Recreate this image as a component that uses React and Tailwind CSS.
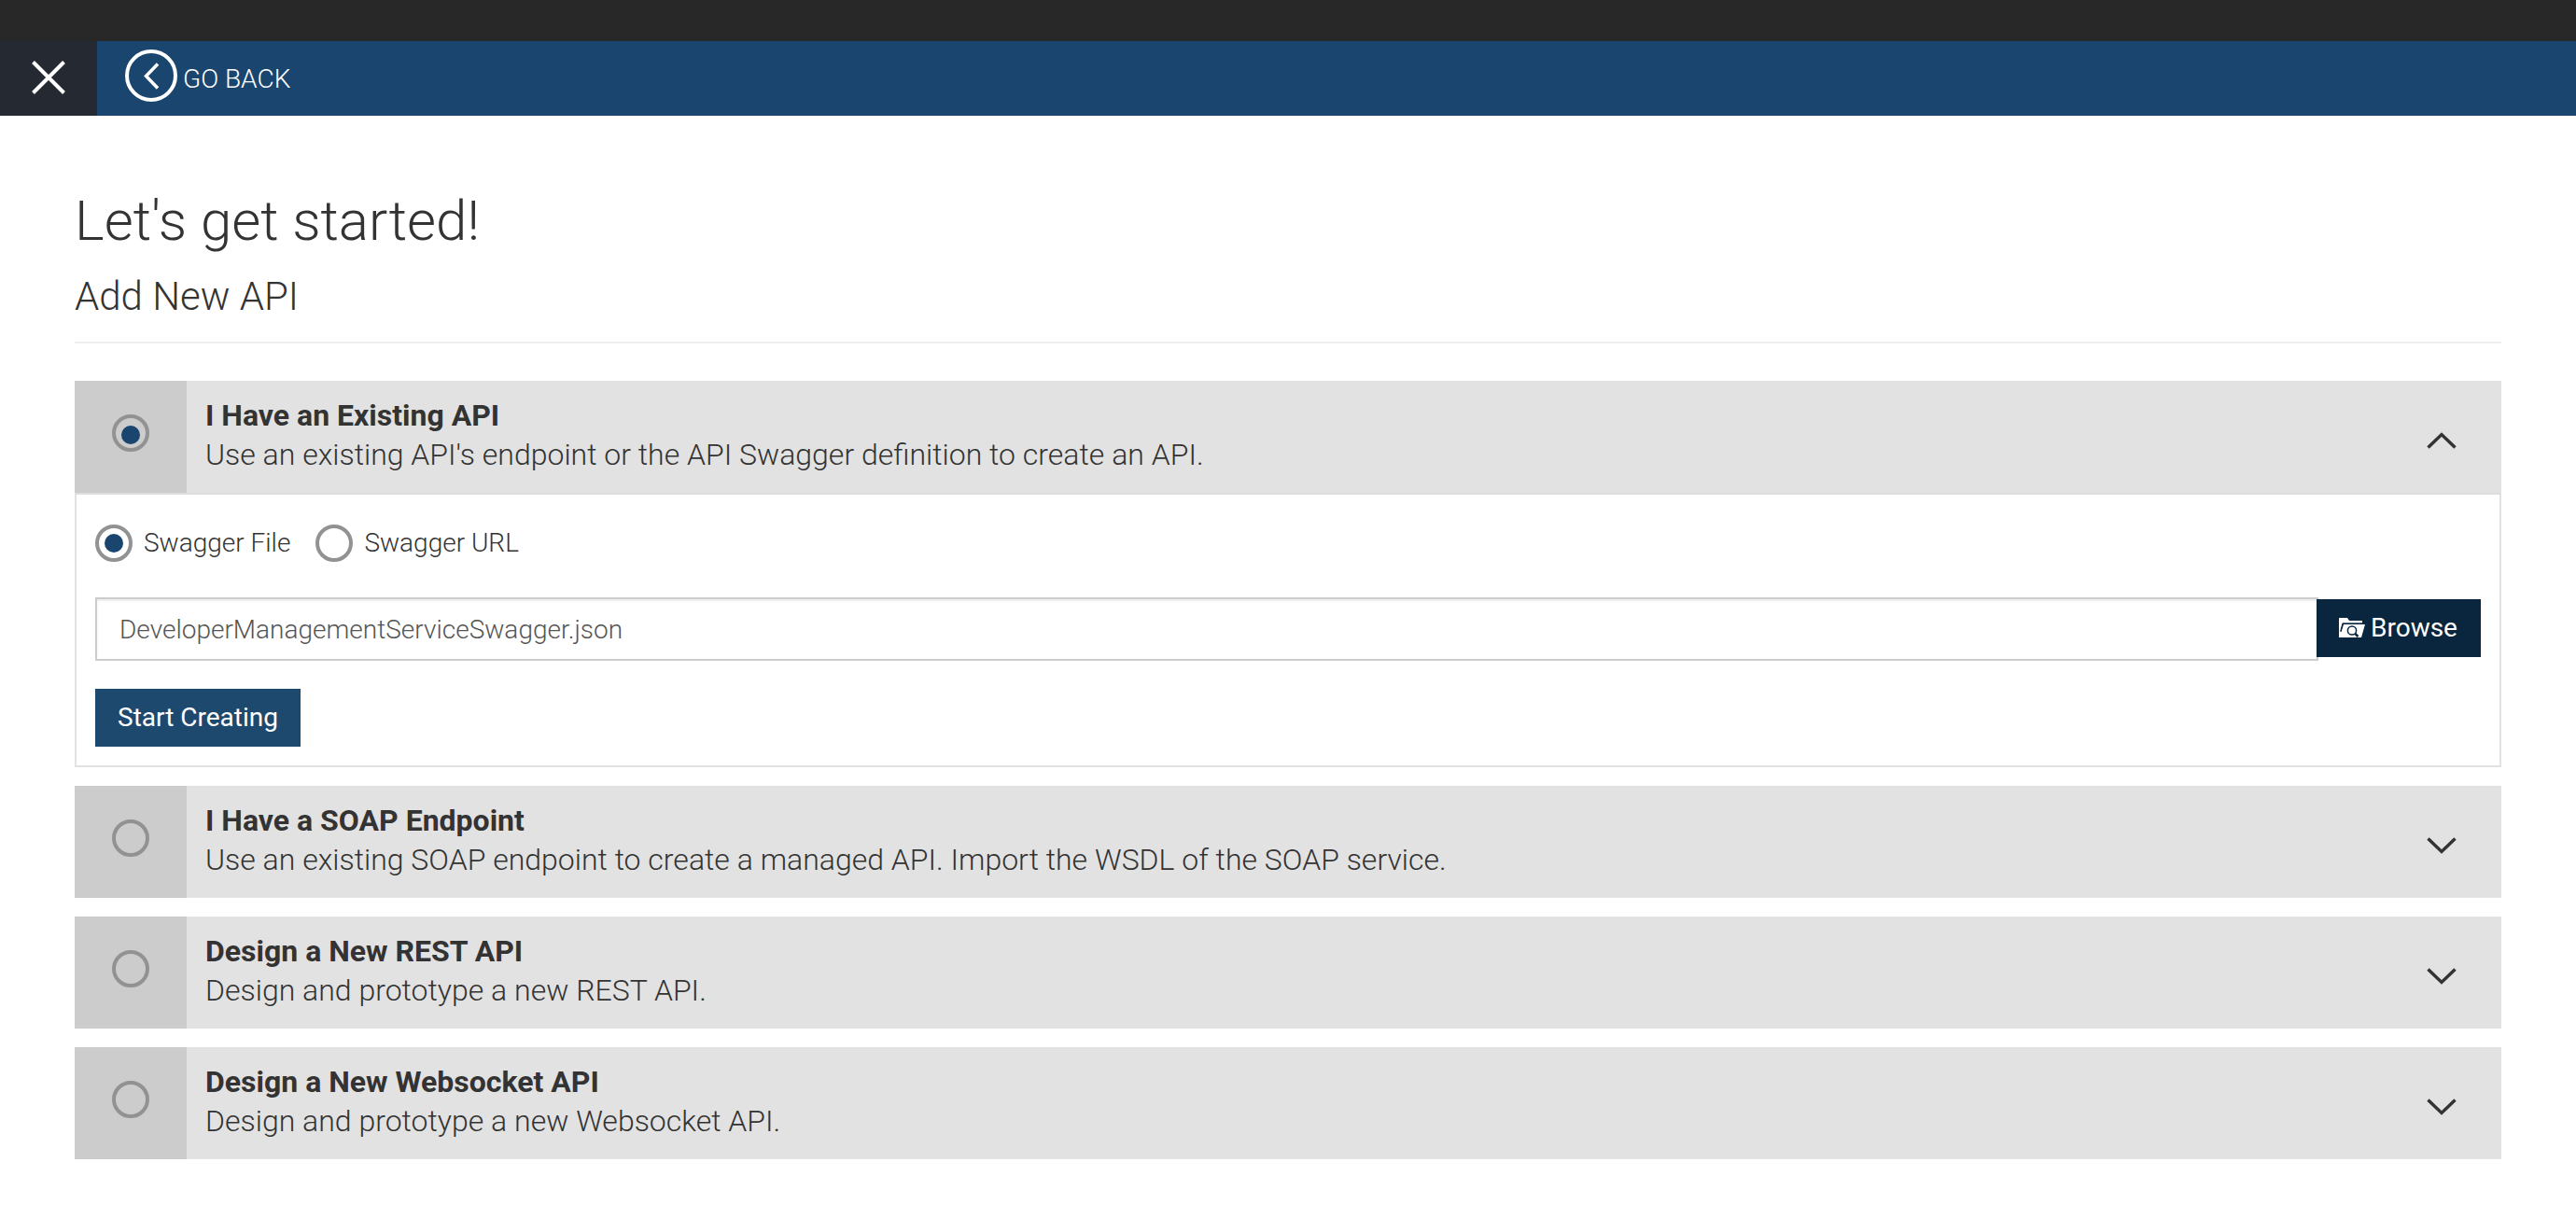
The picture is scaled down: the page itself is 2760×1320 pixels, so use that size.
import { useState } from "react";

const OPTIONS = [
  {
    id: "existing",
    title: "I Have an Existing API",
    text: "Use an existing API's endpoint or the API Swagger definition to create an API.",
  },
  {
    id: "soap",
    title: "I Have a SOAP Endpoint",
    text: "Use an existing SOAP endpoint to create a managed API. Import the WSDL of the SOAP service.",
  },
  { id: "rest", title: "Design a New REST API", text: "Design and prototype a new REST API." },
  { id: "websocket", title: "Design a New Websocket API", text: "Design and prototype a new Websocket API." },
];

function Chevron({ open }) {
  return (
    <svg viewBox="0 0 32 18" className="h-[18px] w-8 shrink-0" fill="none" stroke="#333" strokeWidth="3.5" aria-hidden="true">
      <path d={open ? "M1.5 16.5 16 2.6 30.5 16.5" : "M1.5 1.5 16 15.4 30.5 1.5"} />
    </svg>
  );
}

function Radio({ dotClass = "", ...props }) {
  return (
    <span className="grid size-10 shrink-0 place-items-center">
      <input
        type="radio"
        className="peer col-start-1 row-start-1 size-10 appearance-none rounded-full border-4 border-[#929292]"
        {...props}
      />
      <span
        className={
          "pointer-events-none col-start-1 row-start-1 hidden size-5 rounded-full bg-[#19456f] peer-checked:block " + dotClass
        }
      />
    </span>
  );
}

function SwaggerPanel() {
  const [source, setSource] = useState("file");
  return (
    <div className="border-2 border-[#e2e2e2] border-t-[#ddd] px-5 pt-8 pb-5">
      <div className="flex gap-[27px]">
        <label className="flex items-center gap-3 text-[28px] leading-10">
          <Radio name="source" checked={source === "file"} onChange={() => setSource("file")} />
          Swagger File
        </label>
        <label className="flex items-center gap-3 text-[28px] leading-10">
          <Radio name="source" checked={source === "url"} onChange={() => setSource("url")} />
          Swagger URL
        </label>
      </div>
      <div className="mt-[38px] flex items-start">
        <input
          type="text"
          aria-label="Swagger file"
          defaultValue="DeveloperManagementServiceSwagger.json"
          className="-mr-0.5 h-[68px] min-w-0 flex-1 border-2 border-[#ccc] px-6 text-[28px] font-light text-[#555] shadow-[inset_0_2px_2px_rgba(0,0,0,0.075)]"
        />
        <button
          type="button"
          className="relative mt-0.5 flex h-[62px] w-44 items-center gap-1.5 bg-[#0a263f] pl-6 text-[28px] font-normal text-white"
        >
          <svg viewBox="0 0 28 22" className="h-[22px] w-7" aria-hidden="true">
            <path d="M0 0h9l2 3h14v2.500H4L1.500 14.500 2.500 15 5 7h23l-4 14H0z" fill="#fff" />
            <path d="M4 6.500 1.800 14.500" stroke="#0a263f" strokeWidth="1.300" />
            <path d="M3.500 6.300H25" stroke="#0a263f" strokeWidth="1.200" />
            <circle cx="14" cy="13.500" r="4.600" fill="none" stroke="#0a263f" strokeWidth="1.500" />
            <path d="m17.300 16.800 3.200 3.200" stroke="#0a263f" strokeWidth="2.500" />
          </svg>
          Browse
        </button>
      </div>
      <button type="button" className="mt-[30px] block h-[62px] bg-[#1e496f] px-6 text-[28px] font-normal text-white">
        Start Creating
      </button>
    </div>
  );
}

export default function App() {
  const [selected, setSelected] = useState("existing");
  return (
    <div className="min-h-screen bg-white font-['Roboto',sans-serif] font-light text-[#333]">
      <div className="h-11 bg-[#282828]" />
      <header className="flex h-20 bg-[#19456f] text-white">
        <button type="button" aria-label="Close" className="grid w-[104px] place-items-center bg-[#252932] pb-0.5">
          <svg viewBox="0 0 36 36" className="size-9" fill="none" stroke="#fff" strokeWidth="4" aria-hidden="true">
            <path d="M1.500 1.500 34.500 34.500M34.500 1.500 1.500 34.500" />
          </svg>
        </button>
        <a href="#back" className="flex items-start gap-1.5 pt-[9px] pl-[30px] text-[28px] leading-[64px]">
          <svg viewBox="0 0 56 56" className="size-14" fill="none" stroke="#fff" aria-hidden="true">
            <circle cx="28" cy="28" r="26" strokeWidth="4" />
            <path d="M35 15.500 22.500 28.500 35 41.500" strokeWidth="3.500" />
          </svg>
          GO BACK
        </a>
      </header>
      <main className="px-20 pt-20">
        <h1 className="text-[60px] leading-[66px]">Let's get started!</h1>
        <h2 className="mt-5 text-[42px] leading-[56px]">Add New API</h2>
        <hr className="mt-5 border-t-2 border-[#eee]" />
        <div className="mt-10 flex flex-col gap-5">
          {OPTIONS.map((option) => {
            const open = option.id === selected;
            return (
              <section key={option.id}>
                <label className="flex h-[120px] items-stretch bg-[#e2e2e2] pr-12">
                  <span className="flex w-[120px] justify-center bg-[#ccc] pt-9">
                    <Radio name="kind" dotClass="mt-1" checked={open} onChange={() => setSelected(option.id)} />
                  </span>
                  <span className="min-w-0 flex-1 pt-4 pl-5 text-[32px] leading-[42px]">
                    <strong className="block font-bold">{option.title}</strong>
                    <span className="block">{option.text}</span>
                  </span>
                  <span className="flex items-center pt-2">
                    <Chevron open={open} />
                  </span>
                </label>
                {open && option.id === "existing" && <SwaggerPanel />}
              </section>
            );
          })}
        </div>
      </main>
    </div>
  );
}
